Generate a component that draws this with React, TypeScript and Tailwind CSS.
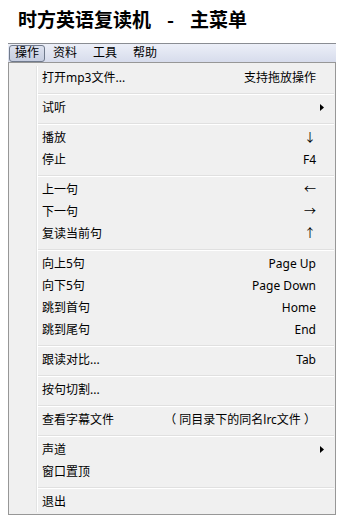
import React from 'react';

type Item = { label: string; hint?: string; sub?: boolean } | 'sep';

const items: Item[] = [
  { label: '打开mp3文件...', hint: '支持拖放操作' },
  'sep',
  { label: '试听', sub: true },
  'sep',
  { label: '播放', hint: '↓' },
  { label: '停止', hint: 'F4' },
  'sep',
  { label: '上一句', hint: '←' },
  { label: '下一句', hint: '→' },
  { label: '复读当前句', hint: '↑' },
  'sep',
  { label: '向上5句', hint: 'Page Up' },
  { label: '向下5句', hint: 'Page Down' },
  { label: '跳到首句', hint: 'Home' },
  { label: '跳到尾句', hint: 'End' },
  'sep',
  { label: '跟读对比...', hint: 'Tab' },
  'sep',
  { label: '按句切割...' },
  'sep',
  { label: '查看字幕文件', hint: '（ 同目录下的同名lrc文件 ）' },
  'sep',
  { label: '声道', sub: true },
  { label: '窗口置顶' },
  'sep',
  { label: '退出' },
];

function Arrow() {
  return (
    <svg width="4" height="7" viewBox="0 0 4 7">
      <path d="M0 0 L4 3.5 L0 7 Z" fill="#000" />
    </svg>
  );
}

export default function App() {
  return (
    <div className="w-[347px] h-[525px] bg-white text-black font-['Noto_Sans','Noto_Sans_CJK_SC',sans-serif]">
      <h1 className="h-[43px] pl-[18px] pt-[6px] text-[19px] leading-[26px] font-bold font-['Noto_Sans_CJK_SC',sans-serif] whitespace-pre">
        <span>时方英语复读机</span>
        <span className="mx-[16px]">-</span>
        <span>主菜单</span>
      </h1>

      <div className="ml-[8px] w-[328px]">
        {/* menubar */}
        <div className="h-[19px] border-t border-[#8a8d93] bg-gradient-to-b from-[#eceff8] to-[#d7dcec] flex items-center text-[12px] leading-[16px]">
          <div className="ml-[1px] h-[17px] px-[5px] flex items-center border border-[#707a8c] rounded-[3px] bg-gradient-to-b from-[#dde2ef] to-[#c6cde0]">操作</div>
          <div className="h-[17px] px-[7px] flex items-center border border-transparent">资料</div>
          <div className="h-[17px] px-[7px] flex items-center border border-transparent">工具</div>
          <div className="h-[17px] px-[7px] flex items-center border border-transparent">帮助</div>
        </div>

        {/* dropdown */}
        <div className="flex border border-[#979797] bg-[#f0f0f0] pt-[3px] pb-[2px] text-[12px] leading-[16px]">
          <div className="w-[28px] border-r border-[#e2e3e3]" />
          <div className="flex-1 flex flex-col border-l border-white">
            {items.map((it, i) =>
              it === 'sep' ? (
                <div key={i} className="h-[8px] pt-[5px] mr-[1px]">
                  <div className="h-[2px] border-t border-[#e0e0e0] border-b border-b-white" />
                </div>
              ) : (
                <div
                  key={i}
                  className={
                    'h-[22px] pt-[1px] flex items-center justify-between pl-[4px] ' +
                    (it.sub ? 'pr-[11px]' : 'pr-[19px]')
                  }
                >
                  <span>{it.label}</span>
                  {it.sub ? <Arrow /> : <span className="whitespace-pre">{it.hint}</span>}
                </div>
              )
            )}
          </div>
        </div>
      </div>
    </div>
  );
}
